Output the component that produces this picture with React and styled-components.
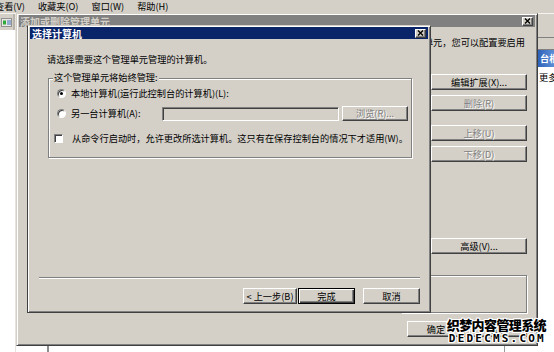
import React from "react";
import styled, { createGlobalStyle } from "styled-components";

const FACE = "#d4d0c8";
const SHADOW = "#808080";
const DARK = "#404040";

const GlobalStyle = createGlobalStyle`
  html, body { margin: 0; padding: 0; background: #fff; }
  body {
    font-family: "Noto Sans CJK SC", "Noto Sans", sans-serif;
    font-size: 9.2px;
    color: #000;
  }
  * { box-sizing: border-box; }
`;

/* whole captured screen */
const Screen = styled.div`
  position: relative;
  width: 554px;
  height: 352px;
  overflow: hidden;
  display: flex;
  flex-direction: column;
  background: #fff;
  line-height: 11px;
`;

const MenuBar = styled.div`
  flex: none;
  height: 13px;
  display: flex;
  align-items: center;
  gap: 13px;
  padding-left: 0;
  margin-left: -5px;
  background: ${FACE};
  white-space: nowrap;
`;

const MenuItem = styled.span``;

const Workspace = styled.div`
  flex: 1;
  display: flex;
  min-height: 0;
  border-top: 1px solid #f4f3ef;
`;

/* left console tree strip */
const SidePane = styled.div`
  width: 16px;
  flex: none;
  display: flex;
  flex-direction: column;
  border-right: 1px solid #e6e3dc;
`;

const SideToolbar = styled.div`
  height: 16px;
  display: flex;
  align-items: center;
  padding-left: 1px;
  background: ${FACE};
  border-right: 2px solid #b8b4ac;
`;

const Pane = styled.div`
  flex: ${(p) => (p.$w ? "none" : "1")};
  width: ${(p) => (p.$w ? `${p.$w}px` : "auto")};
  background: #fff;
  border-right: ${(p) => p.$line || "none"};
`;

/* right action pane */
const ActionPane = styled.div`
  width: 16px;
  flex: none;
  display: flex;
  flex-direction: column;
  overflow: hidden;
  white-space: nowrap;
  background: #fff;
`;

const ActionBand = styled.div`
  height: ${(p) => p.$h}px;
  flex: none;
  background: ${FACE};
  border-bottom: 1px solid ${SHADOW};
`;

const ActionHeader = styled.div`
  height: 17px;
  flex: none;
  display: flex;
  align-items: center;
  padding-left: 2px;
  background: linear-gradient(90deg, #2e62b8, #5d8fd6);
  color: #fff;
  font-weight: bold;
`;

const ActionLink = styled.div`
  padding: 5px 0 0 1px;
`;

/* classic window frame */
const Window = styled.div`
  position: absolute;
  left: ${(p) => p.$x}px;
  top: ${(p) => p.$y}px;
  width: ${(p) => p.$w}px;
  height: ${(p) => p.$h}px;
  display: flex;
  flex-direction: column;
  background: ${FACE};
  border: 1px solid;
  border-color: ${(p) => (p.$front ? `${FACE} ${DARK} ${DARK} ${DARK}` : `${FACE} ${DARK} ${DARK} ${FACE}`)};
  box-shadow: inset 1px 1px #fff, inset -1px -1px ${SHADOW};
  padding: 1px 2px 2px;
`;

const TitleBar = styled.div`
  height: 12px;
  flex: none;
  display: flex;
  align-items: center;
  justify-content: space-between;
  padding: 0 2px 0 ${(p) => (p.$active ? 2 : 1)}px;
  background: ${(p) => (p.$active ? "#0a246a" : "#808080")};
  color: ${(p) => (p.$active ? "#fff" : FACE)};
  font-weight: bold;
  font-size: 10px;
  white-space: nowrap;
`;

const CloseBox = styled.span`
  width: 11px;
  height: 9px;
  display: flex;
  align-items: center;
  justify-content: center;
  background: ${FACE};
  border: 1px solid;
  border-color: #fff ${DARK} ${DARK} #fff;
  box-shadow: inset -1px -1px ${SHADOW};
`;

const CloseIcon = () => (
  <svg width="7" height="6" viewBox="0 0 7 6">
    <path d="M1 0.5 L6 5.5 M6 0.5 L1 5.5" stroke="#000" strokeWidth="1.4" />
  </svg>
);

const Button = styled.div`
  flex: none;
  width: ${(p) => p.$w}px;
  height: ${(p) => p.$h || 16}px;
  margin-top: ${(p) => p.$mt || 0}px;
  margin-left: ${(p) => p.$ml || 0}px;
  display: flex;
  align-items: center;
  justify-content: center;
  background: ${FACE};
  border: 1px solid;
  border-color: ${(p) => (p.$default ? "#000" : `#fff ${DARK} ${DARK} #fff`)};
  box-shadow: ${(p) =>
    p.$default
      ? `inset 1px 1px #fff, inset -1px -1px ${DARK}, inset -2px -2px ${SHADOW}`
      : `inset -1px -1px ${SHADOW}`};
  color: ${(p) => (p.$disabled ? SHADOW : "#000")};
  text-shadow: ${(p) => (p.$disabled ? "1px 1px #fff" : "none")};
  white-space: nowrap;
`;

/* outer "add / remove snap-in" dialog body */
const OuterBody = styled.div`
  flex: 1;
  display: flex;
  flex-direction: column;
  padding: 0 8px 0 6px;
`;

const Description = styled.div`
  margin: 10px 2px 0 0;
  text-align: right;
  white-space: nowrap;
  overflow: hidden;
`;

const OuterMain = styled.div`
  display: flex;
  justify-content: flex-end;
`;

const SideColumn = styled.div`
  width: 96px;
  display: flex;
  flex-direction: column;
`;

const EtchedFrame = styled.div`
  margin: 21px 0 0 -30px;
  height: 38px;
  border: 1px solid ${SHADOW};
  box-shadow: inset 1px 1px #fff, 1px 1px #fff;
`;

const Footer = styled.div`
  margin-top: 8px;
  display: flex;
  justify-content: flex-end;
  gap: 4px;
`;

/* inner "select computer" dialog */
const InnerBody = styled.div`
  flex: 1;
  display: flex;
  flex-direction: column;
`;

const Prompt = styled.div`
  margin: 15px 0 0 17px;
  white-space: nowrap;
`;

const GroupBox = styled.div`
  margin: 13px 0 0 18px;
  width: 364px;
  display: flex;
  flex-direction: column;
  padding: 0 0 13px 8px;
  border: 1px solid ${SHADOW};
  box-shadow: inset 1px 1px #fff, 1px 1px #fff;
`;

const Legend = styled.div`
  align-self: flex-start;
  margin: -7px 0 0 -4px;
  padding: 0 1px;
  background: ${FACE};
  white-space: nowrap;
`;

const OptionRow = styled.div`
  display: flex;
  align-items: center;
  gap: ${(p) => p.$gap || 5}px;
  margin: ${(p) => p.$mt}px 0 0 ${(p) => p.$ml || 0}px;
  height: ${(p) => p.$h || 11}px;
  white-space: nowrap;
`;

const Radio = styled.span`
  position: relative;
  width: 9px;
  height: 9px;
  flex: none;
  border-radius: 50%;
  border: 1px solid;
  border-color: ${SHADOW} #fff #fff ${SHADOW};
  background: #fff;
  box-shadow: inset 1px 1px ${DARK};
  &::after {
    content: "";
    display: ${(p) => (p.$checked ? "block" : "none")};
    position: absolute;
    left: 2px;
    top: 2px;
    width: 3px;
    height: 3px;
    border-radius: 50%;
    background: #000;
  }
`;

const CheckBox = styled.span`
  width: 9px;
  height: 9px;
  flex: none;
  border: 1px solid;
  border-color: ${SHADOW} #fff #fff ${SHADOW};
  background: #fff;
  box-shadow: inset 1px 1px ${DARK};
`;

const RowLabel = styled.span`
  flex: none;
  width: ${(p) => (p.$w ? `${p.$w}px` : "auto")};
`;

const TextBox = styled.span`
  flex: none;
  width: ${(p) => p.$w}px;
  height: 14px;
  margin-right: -2px;
  border: 1px solid;
  border-color: ${SHADOW} #fff #fff ${SHADOW};
  box-shadow: inset 1px 1px ${DARK};
  background: ${FACE};
`;

const Grow = styled.div`
  flex: 1;
`;

const Separator = styled.div`
  margin: 0 8px 0 9px;
  height: 2px;
  border-top: 1px solid ${SHADOW};
  border-bottom: 1px solid #fff;
`;

const WizardButtons = styled.div`
  margin: 9px 0 6px;
  padding-right: 8px;
  display: flex;
  justify-content: flex-end;
`;

const Watermark = styled.div`
  position: absolute;
  right: 8px;
  top: 316px;
  display: flex;
  flex-direction: column;
  align-items: center;
  font-weight: 900;
  color: #000;
  text-shadow: 1px 0 #fff, -1px 0 #fff, 0 1px #fff, 0 -1px #fff, 1px 1px #fff,
    -1px -1px #fff, 1px -1px #fff, -1px 1px #fff;
`;

const WatermarkTitle = styled.div`
  font-size: 13px;
  line-height: 17px;
  letter-spacing: -0.6px;
  white-space: nowrap;
`;

const WatermarkDomain = styled.div`
  font-family: "DejaVu Sans Mono", monospace;
  font-weight: bold;
  font-size: 11px;
  line-height: 12px;
  letter-spacing: 2.2px;
  margin-right: -2px;
`;

const ToolIcon = () => (
  <svg width="12" height="9" viewBox="0 0 12 9">
    <rect x="0.5" y="0.5" width="10" height="8" fill="#e8e6e0" stroke="#909090" />
    <rect x="2" y="2.5" width="3" height="4" fill="#2fa83a" />
    <path d="M7 2 V7 M9 2 V7" stroke="#4070c0" strokeWidth="1" />
  </svg>
);

export default function App() {
  return (
    <>
      <GlobalStyle />
      <Screen>
        <MenuBar>
          <MenuItem>查看(V)</MenuItem>
          <MenuItem>收藏夹(O)</MenuItem>
          <MenuItem>窗口(W)</MenuItem>
          <MenuItem>帮助(H)</MenuItem>
        </MenuBar>

        <Workspace>
          <SidePane>
            <SideToolbar>
              <ToolIcon />
            </SideToolbar>
          </SidePane>
          <Pane $w={33} $line="2px solid #8c8c8c" />
          <Pane $line="1px solid #9a9a9a" />
          <Pane $w={33} />
          <ActionPane>
            <ActionBand $h={24} />
            <ActionBand $h={12} />
            <ActionHeader>台根节点</ActionHeader>
            <ActionLink>更多操作</ActionLink>
          </ActionPane>
        </Workspace>

        <Window $x={16} $y={13} $w={522} $h={333}>
          <TitleBar>
            <span>添加或删除管理单元</span>
            <CloseBox>
              <CloseIcon />
            </CloseBox>
          </TitleBar>
          <OuterBody>
            <Description>使用此页添加或删除控制台中的独立管理单元，您可以配置要启用</Description>
            <OuterMain>
              <SideColumn>
                <Button $w={96} $mt={26}>编辑扩展(X)...</Button>
                <Button $w={96} $mt={5} $disabled>删除(R)</Button>
                <Button $w={96} $mt={14} $disabled>上移(U)</Button>
                <Button $w={96} $mt={5} $disabled>下移(D)</Button>
                <Button $w={96} $mt={76}>高级(V)...</Button>
                <EtchedFrame />
              </SideColumn>
            </OuterMain>
            <Footer>
              <Button $w={58}>确定</Button>
              <Button $w={58}>取消</Button>
            </Footer>
          </OuterBody>
        </Window>

        <Window $x={27} $y={25} $w={404} $h={288} $front>
          <TitleBar $active>
            <span>选择计算机</span>
            <CloseBox>
              <CloseIcon />
            </CloseBox>
          </TitleBar>
          <InnerBody>
            <Prompt>请选择需要这个管理单元管理的计算机。</Prompt>
            <GroupBox>
              <Legend>这个管理单元将始终管理:</Legend>
              <OptionRow $mt={5}>
                <Radio $checked />
                <RowLabel>本地计算机(运行此控制台的计算机)(L):</RowLabel>
              </OptionRow>
              <OptionRow $mt={7} $h={15}>
                <Radio />
                <RowLabel $w={86}>另一台计算机(A):</RowLabel>
                <TextBox $w={177} />
                <Button $w={66} $h={15} $disabled>浏览(R)...</Button>
              </OptionRow>
              <OptionRow $mt={12} $ml={-3} $gap={9}>
                <CheckBox />
                <RowLabel>从命令行启动时，允许更改所选计算机。这只有在保存控制台的情况下才适用(W)。</RowLabel>
              </OptionRow>
            </GroupBox>
            <Grow />
            <Separator />
            <WizardButtons>
              <Button $w={54}>&lt; 上一步(B)</Button>
              <Button $w={57} $ml={1} $default>完成</Button>
              <Button $w={57} $ml={8}>取消</Button>
            </WizardButtons>
          </InnerBody>
        </Window>

        <Watermark>
          <WatermarkTitle>织梦内容管理系统</WatermarkTitle>
          <WatermarkDomain>DEDECMS.COM</WatermarkDomain>
        </Watermark>
      </Screen>
    </>
  );
}
